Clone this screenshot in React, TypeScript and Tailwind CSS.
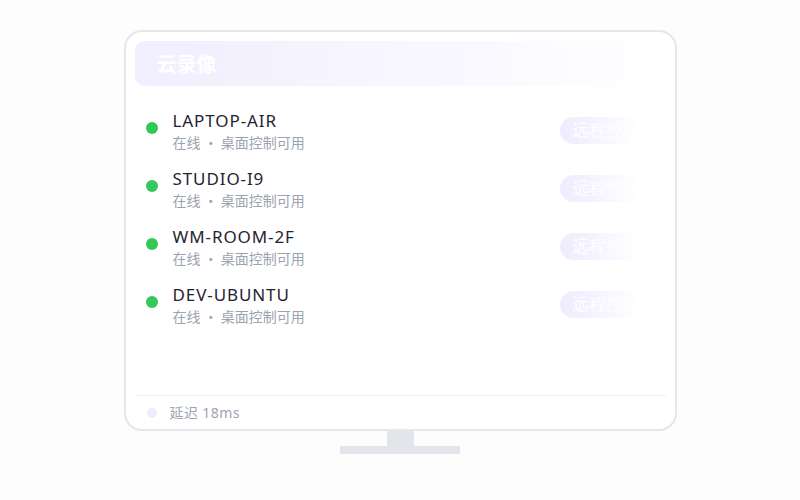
import React from "react";

const devices = ["LAPTOP-AIR", "STUDIO-I9", "WM-ROOM-2F", "DEV-UBUNTU"];

export default function App() {
  return (
    <div
      className="w-[800px] h-[500px] bg-[#fdfdfe] flex flex-col items-center pt-[30px]"
      style={{ fontFamily: '"Noto Sans CJK SC", "Noto Sans", sans-serif' }}
    >
      <div className="w-[553px] h-[401px] border-2 border-[#e4e7eb] rounded-[18px] bg-white p-[9px] flex flex-col">
        <div className="h-[45px] rounded-[10px] bg-gradient-to-r from-[#f1eefe] via-[#f8f6ff] to-white flex items-center pl-[22px]">
          <span className="text-[20px] font-bold text-white leading-none">云录像</span>
        </div>
        <div className="flex flex-col gap-[18px] pt-[24px]">
          {devices.map((d) => (
            <div key={d} className="flex items-start pl-[11px] h-[40px]">
              <div className="w-[12px] h-[12px] rounded-full bg-[#34c759] mt-[12px] shrink-0" />
              <div className="ml-[15px] flex flex-col flex-1">
                <span
                  className="text-[17px] leading-[22px] tracking-[0.9px] text-[#1f2430]"
                  style={{ fontFamily: '"Noto Sans", sans-serif' }}
                >
                  {d}
                </span>
                <span className="text-[14px] leading-[20px] text-[#9ca3af]">在线 · 桌面控制可用</span>
              </div>
              <div
                className="mt-[7px] mr-[26px] w-[80px] h-[27px] rounded-full bg-gradient-to-r from-[#efebfe] via-[#f6f4ff] to-white/0 flex items-center pl-[12px] text-white text-[17px] overflow-hidden whitespace-nowrap"
                style={{ fontFamily: '"DejaVu Serif", serif' }}
              >
                远程控制
              </div>
            </div>
          ))}
        </div>
        <div className="mt-auto border-t border-[#eef0f3] pt-[10px] h-[25px] flex items-center pl-[12px]">
          <div className="w-[10px] h-[10px] rounded-full bg-[#efebfe]" />
          <span
            className="ml-[13px] text-[14px] leading-[16px] tracking-[0.4px] text-[#9ca3af]"
            style={{ fontFamily: '"Noto Sans", "Noto Sans CJK SC", sans-serif' }}
          >
            延迟 18ms
          </span>
        </div>
      </div>
      <div className="w-[27px] h-[15px] bg-[#e2e5e9]" />
      <div className="w-[120px] h-[8px] bg-[#e2e5e9]" />
    </div>
  );
}
